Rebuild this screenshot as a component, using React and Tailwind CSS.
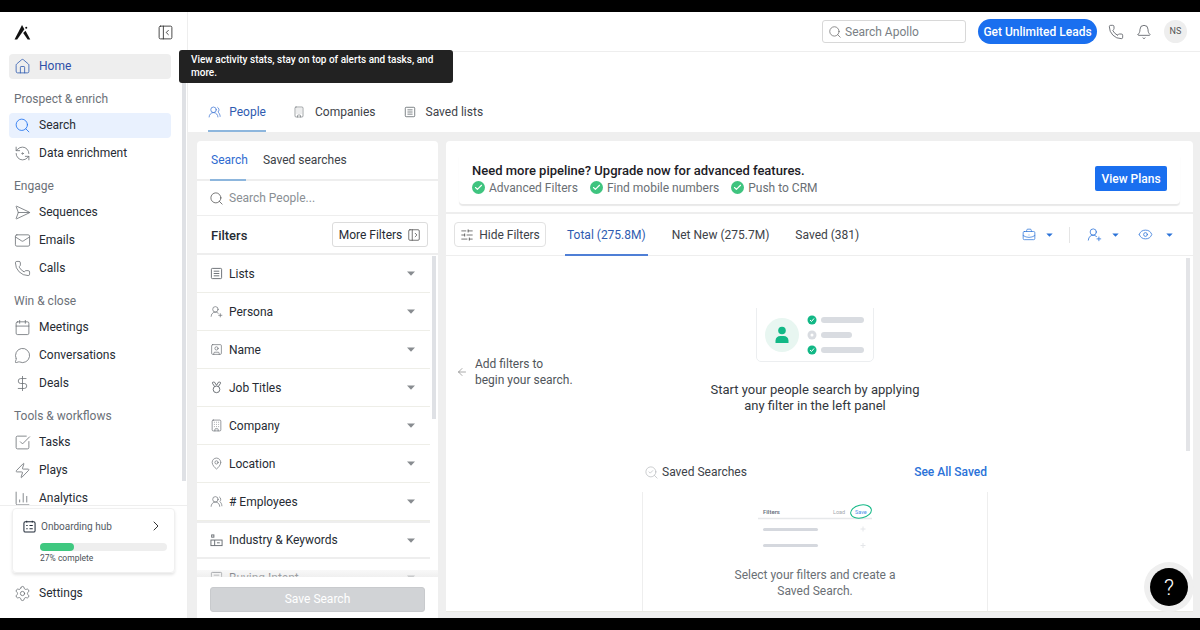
import {
  Home, Search, SendHorizontal, Mail, Phone, Calendar, MessageCircle, DollarSign, SquareCheckBig, Zap, ChartColumn,
  Settings, ChevronRight, PanelLeftClose, PanelLeftOpen, UsersRound, Building, SquareUser, MapPin, UserRoundPlus,
  SlidersHorizontal, BriefcaseBusiness, Eye, Bell, ArrowLeft, SearchCheck, RefreshCcwDot, Check,
} from 'lucide-react';

const ListIcon = ({ className }) => (
  <svg viewBox="0 0 14 14" fill="none" stroke="currentColor" strokeWidth="1" className={className}>
    <rect x="1.5" y="1.5" width="11" height="11" rx="1" />
    <path d="M4 4.5h6M4 7h6M4 9.5h6" />
  </svg>
);

const MedalIcon = ({ className }) => (
  <svg viewBox="0 0 14 14" fill="none" stroke="currentColor" strokeWidth="1" className={className}>
    <circle cx="7" cy="9" r="3.6" />
    <path d="M5 6 2.6 2.4a1 1 0 0 1 1-1.2h1.2L7 4.6 9.2 1.2h1.2a1 1 0 0 1 1 1.2L9 6" />
  </svg>
);

const IndustryIcon = ({ className }) => (
  <svg viewBox="0 0 14 14" fill="none" stroke="currentColor" strokeWidth="1" className={className}>
    <rect x="1" y="6.5" width="12" height="6" />
    <path d="M5 6.5v6M7.5 9.5h3" />
    <rect x="1.8" y="1" width="2.4" height="2.4" />
  </svg>
);

const HubIcon = () => (
  <svg viewBox="0 0 14 14" fill="none" stroke="#1f2937" strokeWidth="1.1" className="h-[13px] w-[13px]">
    <rect x="1" y="2" width="12" height="11" rx="1.5" />
    <path d="M4 .8v2M10 .8v2M3.5 6h1.5M7 6h3.5M3.5 9.500h1.500M7 9.500h3.500" />
  </svg>
);

const Logo = () => (
  <svg viewBox="0 0 18 16" className="h-[15px] w-[17px]" fill="#111">
    <path d="M8.500 0 L11 4.600 L3.300 15.500 L0.500 15.500 Z" />
    <path d="M9.700 8.400 L12.200 6.200 L17.300 15.500 L14.500 15.500 Z" />
    <path d="M4.500 15.500 L9.500 9.700 L11.200 15.500 Z" fill="#fff" />
    <circle cx="13" cy="3" r="1.100" />
  </svg>
);

const Caret = ({ className }) => (
  <svg viewBox="0 0 8 5" className={className} fill="currentColor">
    <path d="M0 .5h8L4 4.800z" />
  </svg>
);

const GreenCheck = () => (
  <span className="flex h-[13px] w-[13px] items-center justify-center rounded-full bg-[#3fc47f]">
    <Check size={9} strokeWidth={3} color="#fff" />
  </span>
);

const NavRow = ({ icon: Icon, label, active, home }) => (
  <div className="flex h-7 items-center">
    <div
      className={`flex h-[25px] w-full items-center gap-[8px] rounded-[4px] pl-[5px] ${
        home ? 'bg-[#eeeeee]' : active ? 'bg-[#e9f1fe]' : ''
      }`}
    >
      <Icon
        size={17}
        strokeWidth={1.15}
        className={home ? 'text-[#2f5bb0]' : active ? 'text-[#1a6fef]' : 'text-[#6b7075]'}
      />
      <span className={`text-[12px] ${home ? 'text-[#2f4fa8]' : 'text-[#262b33]'}`}>{label}</span>
    </div>
  </div>
);

const NavGroup = ({ title, items }) => (
  <div className="mt-[9px]">
    <div className="mb-[2px] flex h-5 items-center pl-[5px] text-[12px] text-[#6c7178]">{title}</div>
    {items.map((item) => (
      <NavRow key={item.label} {...item} />
    ))}
  </div>
);

const Sidebar = () => (
  <aside className="flex w-[188px] shrink-0 flex-col border-r border-[#eeeeee] bg-white">
    <div className="flex h-[40px] shrink-0 items-center justify-between pl-[14px] pr-[13px]">
      <Logo />
      <PanelLeftClose size={17} strokeWidth={1.25} className="text-[#333]" />
    </div>
    <div className="flex min-h-0 flex-1">
      <nav className="ml-[9px] w-[162px] shrink-0 overflow-hidden">
        <NavRow icon={Home} label="Home" home />
        <NavGroup
          title="Prospect & enrich"
          items={[
            { icon: Search, label: 'Search', active: true },
            { icon: RefreshCcwDot, label: 'Data enrichment' },
          ]}
        />
        <NavGroup
          title="Engage"
          items={[
            { icon: SendHorizontal, label: 'Sequences' },
            { icon: Mail, label: 'Emails' },
            { icon: Phone, label: 'Calls' },
          ]}
        />
        <NavGroup
          title="Win & close"
          items={[
            { icon: Calendar, label: 'Meetings' },
            { icon: MessageCircle, label: 'Conversations' },
            { icon: DollarSign, label: 'Deals' },
          ]}
        />
        <NavGroup
          title="Tools & workflows"
          items={[
            { icon: SquareCheckBig, label: 'Tasks' },
            { icon: Zap, label: 'Plays' },
            { icon: ChartColumn, label: 'Analytics' },
          ]}
        />
      </nav>
      <div className="ml-[11px] h-[429px] w-[4px] bg-[#dfe1e5]" />
    </div>
    <div className="shrink-0 border-t border-[#eeeeee] px-[12px] pt-[2px]">
      <div className="h-[65px] w-[163px] rounded-[4px] border border-[#f0f0f0] px-[10px] pt-[9px] shadow-[0_2px_3px_rgba(0,0,0,0.1)]">
        <div className="flex items-center gap-[5px]">
          <HubIcon />
          <span className="flex-1 text-[10px] text-[#555b63]">Onboarding hub</span>
          <ChevronRight size={16} strokeWidth={1.5} className="text-[#333]" />
        </div>
        <div className="ml-[17px] mt-[9px] h-2 w-[127px] rounded-full bg-[#eeeeee]">
          <div className="h-2 w-[34px] rounded-full bg-[#3fc880]" />
        </div>
        <div className="ml-[17px] mt-[1px] text-[8.500px] text-[#4b5158]">27% complete</div>
      </div>
      <div className="mb-[14px] mt-[9px] flex h-[22px] items-center gap-[8px] pl-[2px]">
        <Settings size={17} strokeWidth={1.15} className="text-[#6b7075]" />
        <span className="text-[12px] text-[#262b33]">Settings</span>
      </div>
    </div>
  </aside>
);

const TopBar = () => (
  <header className="flex h-[40px] shrink-0 items-center justify-end border-b border-[#eeeeee] bg-white pr-[13px]">
    <div className="flex h-[23px] w-[144px] items-center gap-[3px] rounded-[3px] border border-[#d8d8d8] pl-[5px]">
      <Search size={14} strokeWidth={1.25} className="text-[#666]" />
      <span className="text-[12px] text-[#7a7f85]">Search Apollo</span>
    </div>
    <button className="ml-[12px] h-[25px] w-[119px] rounded-full bg-[#1a6fef] text-[12px] font-medium text-white">
      Get Unlimited Leads
    </button>
    <Phone size={16} strokeWidth={1.15} className="ml-[11px] text-[#4a4f55]" />
    <Bell size={16} strokeWidth={1.15} className="ml-[12px] text-[#4a4f55]" />
    <div className="ml-[12px] flex h-[23px] w-[23px] items-center justify-center rounded-full bg-[#eeeeee] text-[9px] text-[#555]">
      NS
    </div>
  </header>
);

const PageHead = () => (
  <div className="h-[80px] shrink-0 bg-white pl-[20px]">
    <div className="h-[50px] pt-[15px] text-[15px] leading-[22px] text-[#333]">Search</div>
    <div className="flex h-[30px] items-start">
      <div className="flex h-[30px] w-[58px] items-start justify-center gap-[8px] border-b-2 border-[#8db6dd] text-[12px] leading-[20px] text-[#2f5bb0]">
        <UsersRound size={14} strokeWidth={1.25} className="mt-[3px] text-[#2f6bd0]" />
        People
      </div>
      <div className="ml-[27px] flex items-center gap-[10px] text-[12px] leading-[20px] text-[#3d4248]">
        <Building size={12} strokeWidth={1.25} className="text-[#6b7075]" />
        Companies
      </div>
      <div className="ml-[28px] flex items-center gap-[10px] text-[12px] leading-[20px] text-[#3d4248]">
        <ListIcon className="h-[12px] w-[12px] text-[#6b7075]" />
        Saved lists
      </div>
    </div>
  </div>
);

const filters = [
  { icon: ListIcon, label: 'Lists' },
  { icon: UserRoundPlus, label: 'Persona' },
  { icon: SquareUser, label: 'Name' },
  { icon: MedalIcon, label: 'Job Titles' },
  { icon: Building, label: 'Company' },
  { icon: MapPin, label: 'Location' },
  { icon: UsersRound, label: '# Employees' },
  { icon: IndustryIcon, label: 'Industry & Keywords', thick: true },
  { icon: ListIcon, label: 'Buying Intent' },
];

const FilterPanel = () => (
  <section className="flex w-[241px] shrink-0 flex-col rounded-t-[4px] bg-white">
    <div className="flex h-[40px] shrink-0 items-center gap-[15px] border-b-2 border-[#eeeeee] pl-[14px]">
      <div className="relative text-[12px] text-[#2f6bd0]">
        Search
        <div className="absolute -bottom-[12px] -left-[1px] h-[2px] w-[36px] bg-[#8db6dd]" />
      </div>
      <span className="text-[12px] text-[#3d4248]">Saved searches</span>
    </div>
    <div className="flex h-[35px] shrink-0 items-center gap-[5px] border-b border-[#eeeeee] pl-[12px]">
      <Search size={15} strokeWidth={1.25} className="text-[#555]" />
      <span className="text-[12px] text-[#8a8f94]">Search People...</span>
    </div>
    <div className="flex h-[39px] shrink-0 items-center justify-between border-b-2 border-[#eeeeee] pl-[14px] pr-[10px]">
      <span className="pt-[2px] text-[13px] font-medium text-[#262b33]">Filters</span>
      <div className="flex h-[25px] w-[96px] items-center justify-center gap-[5px] rounded-[3px] border border-[#dcdcdc] text-[12px] text-[#262b33]">
        More Filters
        <PanelLeftOpen size={14} strokeWidth={1.25} className="text-[#444]" />
      </div>
    </div>
    <div className="relative flex min-h-0 flex-1 overflow-hidden">
      <div className="w-[233px] shrink-0">
        {filters.map(({ icon: Icon, label, thick }) => (
          <div
            key={label}
            className={`flex h-[38px] items-center pl-[13px] pr-[15px] ${
              thick ? 'border-y-2 border-[#eeeeee]' : 'border-b border-[#eeeee8]'
            }`}
          >
            <Icon size={13} strokeWidth={1.25} className="h-[13px] w-[13px] text-[#666b70]" />
            <span className="ml-[6px] flex-1 text-[12px] text-[#262b33]">{label}</span>
            <Caret className="h-[5px] w-[8px] text-[#888c90]" />
          </div>
        ))}
      </div>
      <div className="ml-[2px] mt-[1px] h-[163px] w-[4px] bg-[#dfe1e5]" />
      <div className="absolute inset-x-0 bottom-0 h-[7px] bg-gradient-to-b from-[#e9e9e9]/30 to-[#e9e9e9]/70" />
    </div>
    <div className="h-[41px] shrink-0 px-[13px] pt-[9px]">
      <button className="h-[25px] w-[215px] rounded-[3px] border border-[#c8cacd] bg-[#d1d3d6] text-[12px] text-white">
        Save Search
      </button>
    </div>
  </section>
);

const Toolbar = () => (
  <div className="flex h-[42px] shrink-0 items-center border-b border-[#eeeeee] pl-[8px] pr-[20px]">
    <div className="flex h-[25px] w-[92px] items-center justify-center gap-[5px] rounded-[4px] border border-[#e2e2e2] text-[12px] text-[#3d4248]">
      <SlidersHorizontal size={14} strokeWidth={1.25} className="text-[#444]" />
      Hide Filters
    </div>
    <div className="relative ml-[21px] text-[12px] text-[#2f5bb0]">
      Total (275.8M)
      <div className="absolute -bottom-[12px] -left-[2px] -right-[2px] h-[1.500px] bg-[#4f7fd6]" />
    </div>
    <span className="ml-[26px] text-[12px] text-[#3d4248]">Net New (275.7M)</span>
    <span className="ml-[26px] text-[12px] text-[#3d4248]">Saved (381)</span>
    <div className="ml-auto flex items-center text-[#2a72d8]">
      <BriefcaseBusiness size={14} strokeWidth={1.25} />
      <Caret className="ml-[10px] h-[4px] w-[7px]" />
      <div className="ml-[16px] h-[16px] w-px bg-[#e5e5e5]" />
      <UserRoundPlus size={15} strokeWidth={1.25} className="ml-[17px]" />
      <Caret className="ml-[10px] h-[4px] w-[7px]" />
      <Eye size={15} strokeWidth={1.25} className="ml-[19px]" />
      <Caret className="ml-[13px] h-[4px] w-[7px]" />
    </div>
  </div>
);

const PeopleArt = () => (
  <svg viewBox="0 0 118 54" className="h-[54px] w-[118px]" fill="none">
    <path d="M.500 0v49a4.500 4.500 0 0 0 4.500 4.500h108a4.500 4.500 0 0 0 4.500-4.500V0" stroke="#eceef0" />
    <circle cx="26" cy="27" r="17" fill="#e8f6f1" />
    <circle cx="26" cy="22.500" r="3.800" fill="#12b886" />
    <path d="M19.500 35v-2.500a5 5 0 0 1 5-4.500h3a5 5 0 0 1 5 4.500V35z" fill="#12b886" />
    <circle cx="56" cy="12" r="4.500" fill="#12b886" />
    <path d="M54 12l1.500 1.500 2.500-3" stroke="#fff" strokeWidth="1" />
    <rect x="65" y="9" width="43" height="6" rx="3" fill="#d9dce1" />
    <circle cx="56" cy="27" r="4.500" fill="#d9dce1" />
    <circle cx="56" cy="27" r="1.500" fill="#fff" />
    <rect x="65" y="24" width="31" height="6" rx="3" fill="#d9dce1" />
    <circle cx="56" cy="42" r="4.500" fill="#12b886" />
    <path d="M54 42l1.500 1.500 2.500-3" stroke="#fff" strokeWidth="1" />
    <rect x="65" y="39" width="43" height="6" rx="3" fill="#d9dce1" />
  </svg>
);

const SaveArt = () => (
  <svg viewBox="0 0 118 50" className="h-[50px] w-[118px]" fill="none">
    <rect x="2" y="2" width="114" height="14" rx="2" fill="#fff" />
    <path d="M2 16.500h114" stroke="#e6e8ea" strokeWidth="1.500" />
    <text x="7" y="11.500" fontSize="6" fontWeight="600" fill="#6b7280" fontFamily="Roboto, sans-serif">Filters</text>
    <text x="77" y="11.500" fontSize="5.500" fill="#a3a7ad" fontFamily="Roboto, sans-serif">Load</text>
    <text x="99" y="11.500" fontSize="5.500" fill="#4b8fe8" fontFamily="Roboto, sans-serif">Save</text>
    <ellipse cx="105" cy="9.500" rx="10.500" ry="6.500" transform="rotate(-12 105 9.500)" stroke="#12b886" strokeWidth="1" />
    <rect x="7" y="26" width="55" height="3" rx="1.500" fill="#d5d8de" />
    <path d="M107 24.500v5M104.500 27h5" stroke="#e4e6e9" />
    <rect x="7" y="42" width="55" height="3" rx="1.500" fill="#d5d8de" />
    <path d="M107 41v5M104.500 43.500h5" stroke="#e4e6e9" />
  </svg>
);

const ResultsPanel = () => (
  <section className="flex h-[471px] min-w-0 flex-1 flex-col rounded-t-[4px] border-b border-[#e8e8e2] bg-white">
    <div className="flex h-[73px] shrink-0 border-b-2 border-[#eeeeee] px-[13px] pt-[12px]">
      <div className="flex h-[51px] w-full items-center justify-between rounded-[4px] px-[13px] shadow-[0_2px_1px_rgba(0,0,0,0.09)]">
        <div>
          <div className="text-[13px] font-medium leading-[18px] text-[#1c2026]">
            Need more pipeline? Upgrade now for advanced features.
          </div>
          <div className="flex items-center text-[12px] leading-[16px] text-[#6a6f75]">
            <GreenCheck />
            <span className="ml-[4px]">Advanced Filters</span>
            <span className="ml-[12px]"><GreenCheck /></span>
            <span className="ml-[4px]">Find mobile numbers</span>
            <span className="ml-[12px]"><GreenCheck /></span>
            <span className="ml-[4px]">Push to CRM</span>
          </div>
        </div>
        <button className="h-[25px] w-[72px] rounded-[2px] bg-[#1a6fef] text-[12px] font-medium text-white">
          View Plans
        </button>
      </div>
    </div>
    <Toolbar />
    <div className="flex min-h-0 flex-1">
      <div className="w-[196px] shrink-0 pl-[10px] pt-[100px]">
        <div className="flex items-start gap-[7px] text-[12px] leading-[16px] text-[#50555b]">
          <ArrowLeft size={12} strokeWidth={1.25} className="mt-[10px] text-[#777]" />
          <div>
            Add filters to
            <br />
            begin your search.
          </div>
        </div>
      </div>
      <div className="flex w-[346px] shrink-0 flex-col items-center overflow-hidden pt-[52px]">
        <PeopleArt />
        <div className="mt-[20px] text-center text-[13px] leading-[16px] text-[#33383e]">
          Start your people search by applying
          <br />
          any filter in the left panel
        </div>
        <div className="mt-[47px] flex h-[22px] w-full items-center pl-[2px] pr-[1px]">
          <SearchCheck size={15} strokeWidth={1.1} className="text-[#b5b8bb]" />
          <span className="ml-[3px] text-[12px] text-[#3d4248]">Saved Searches</span>
          <span className="ml-auto text-[12px] font-medium text-[#2a72d8]">See All Saved</span>
        </div>
        <div className="mt-[9px] flex w-full flex-1 flex-col items-center border-x border-[#eeeeee] pt-[10px]">
          <SaveArt />
          <div className="mt-[15px] text-center text-[12px] leading-[16px] text-[#6a6f75]">
            Select your filters and create a
            <br />
            Saved Search.
          </div>
        </div>
      </div>
      <div className="flex flex-1 justify-end pr-[3px] pt-[2px]">
        <div className="h-[193px] w-[4px] bg-[#e3e4e7]" />
      </div>
    </div>
  </section>
);

export default function App() {
  return (
    <div className="relative flex h-[630px] w-[1200px] flex-col overflow-hidden bg-black font-['Roboto',sans-serif]">
      <div className="h-[12px] shrink-0" />
      <div className="flex min-h-0 flex-1 bg-white">
        <Sidebar />
        <main className="flex min-w-0 flex-1 flex-col">
          <TopBar />
          <PageHead />
          <div className="flex min-h-0 flex-1 gap-[8px] bg-[#efefef] pl-[9px] pr-[7px] pt-[9px]">
            <FilterPanel />
            <ResultsPanel />
          </div>
        </main>
      </div>
      <div className="h-[12px] shrink-0" />

      {/* tooltip from the Home nav item */}
      <div className="absolute left-[179px] top-[50px] h-[33px] w-[274px] rounded-[3px] bg-[#222222] px-[12px] pt-[3px] text-[10px] font-medium leading-[13px] text-white">
        View activity stats, stay on top of alerts and tasks, and more.
      </div>

      {/* help bubble */}
      <div className="absolute left-[1150px] top-[568px] flex h-[38px] w-[38px] items-center justify-center rounded-full bg-black text-[22px] font-light text-white ring-[6px] ring-[#efefef]">
        ?
      </div>
    </div>
  );
}
